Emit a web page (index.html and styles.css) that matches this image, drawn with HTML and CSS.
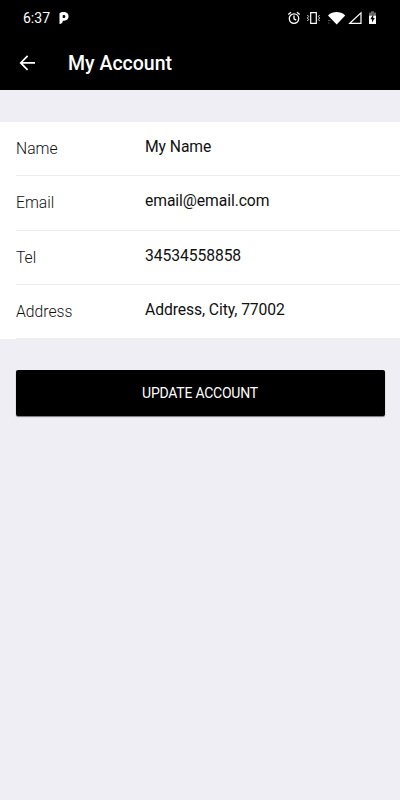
FILE: index.html
```html
<!DOCTYPE html>
<html>
    <head>
        <title>My Account</title>
        <meta charset="UTF-8">
        <meta name="viewport" content="width=device-width, initial-scale=1.0">
        <link rel="stylesheet" href="styles.css">
    </head>
    <body>
        <div class="top">
            <div class="statusbar">
                <span class="clock">6:37</span>
                <svg class="app-icon" width="10" height="12" viewBox="0 0 10 12">
                    <path fill="#fff" fill-rule="evenodd" d="M.5 1.2C1.5 .4 3 0 4.9 0C7.8 0 9.6 1.6 9.6 4.3C9.6 7 7.8 8.7 5.2 8.7H3.8C3.8 10.5 2.8 12 .5 12ZM3.7 3.3V6.1H4.9C5.9 6.1 6.4 5.5 6.4 4.6C6.4 3.6 5.8 3 4.9 3Z"/>
                </svg>
                <svg class="status-icons" width="90" height="16" viewBox="0 0 90 16" fill="none" stroke="#fff">
                    <g stroke-width="1.3">
                        <circle cx="7" cy="8.6" r="4.7"/>
                        <path d="M7 5.6V8.8L9.2 10.1M1.3 4.4L4 2.2M12.7 4.4L10 2.2"/>
                    </g>
                    <path stroke-width="1.2" d="M23.7 2.7H29.3V13.3H23.7Z"/>
                    <path stroke-width="1" stroke="#ddd" d="M20.4 5L21.6 6.5L20.4 8L21.6 9.5L20.4 11M32.6 5L31.4 6.5L32.6 8L31.4 9.5L32.6 11"/>
                    <path fill="#fff" stroke="none" d="M41 5.4C46 1 53.2 1 58.2 5.4L49.7 14.4Z"/>
                    <path stroke="#555" d="M41 10.5H43.5M41 13H42.5"/>
                    <path stroke-width="1.2" d="M62.8 13.3L74 2.9V13.3Z"/>
                    <g stroke="none">
                        <path fill="#666" d="M82 2.5H84V1.3H87V2.5H89V5.5H82Z"/>
                        <path fill="#fff" d="M82 5.5H89V14H82Z"/>
                        <path fill="#000" d="M86.2 4.6V8H87.8L85 12.4V9.2H83.3Z"/>
                    </g>
                </svg>
            </div>
            <div class="header">
                <svg class="back" width="17" height="16" viewBox="0 0 17 16" fill="none" stroke="#fff" stroke-width="1.7">
                    <path d="M16 7.9H1.7M8.6 .9L1.7 7.9L8.6 14.9"/>
                </svg>
                <h1>My Account</h1>
            </div>
        </div>
        <div class="list">
            <div class="item">
                <div class="item-label">Name</div>
                <div class="item-value">My Name</div>
            </div>
            <div class="item">
                <div class="item-label">Email</div>
                <div class="item-value">email@email.com</div>
            </div>
            <div class="item">
                <div class="item-label">Tel</div>
                <div class="item-value">34534558858</div>
            </div>
            <div class="item">
                <div class="item-label">Address</div>
                <div class="item-value">Address, City, 77002</div>
            </div>
        </div>
        <button type="button">UPDATE ACCOUNT</button>
    </body>
</html>
```
FILE: styles.css
```css
body{
    margin: 0;
    min-height: 100vh;
    background-color: #efeef4;
    font-family: Roboto, sans-serif;
    color: #111;
}
.top{
    height: 90px;
    background-color: black;
    color: white;
}
.statusbar{
    display: flex;
    align-items: center;
    height: 36px;
    padding: 0px 23px;
}
.clock{
    font-size: 14px;
    width: 36px;
}
.status-icons{
    display: block;
    margin-left: auto;
}
.header{
    display: flex;
    align-items: center;
    height: 54px;
    padding-left: 19px;
}
h1{
    margin: 0px 0px 0px 32px;
    font-size: 19.5px;
    font-weight: 500;
}
.list{
    margin-top: 32px;
    background-color: white;
}
.item{
    display: flex;
    box-sizing: border-box;
    height: 54.3px;
    margin-left: 16px;
    border-bottom: 1px solid #ececee;
    font-size: 15.7px;
    line-height: 20px;
}
.item-label{
    width: 129px;
    padding-top: 17px;
    font-weight: 300;
}
.item-value{
    padding-top: 15px;
    letter-spacing: -0.08px;
}
button{
    display: block;
    width: 369px;
    height: 46px;
    margin: 31px 0px 0px 16px;
    padding: 0px 1px 0px 0px;
    border: 0px;
    border-radius: 2px;
    background-color: black;
    box-shadow: 0px 1px 1px rgba(0,0,0,0.5);
    color: white;
    font-family: Roboto, sans-serif;
    font-size: 14px;
    letter-spacing: -0.24px;
}
```
